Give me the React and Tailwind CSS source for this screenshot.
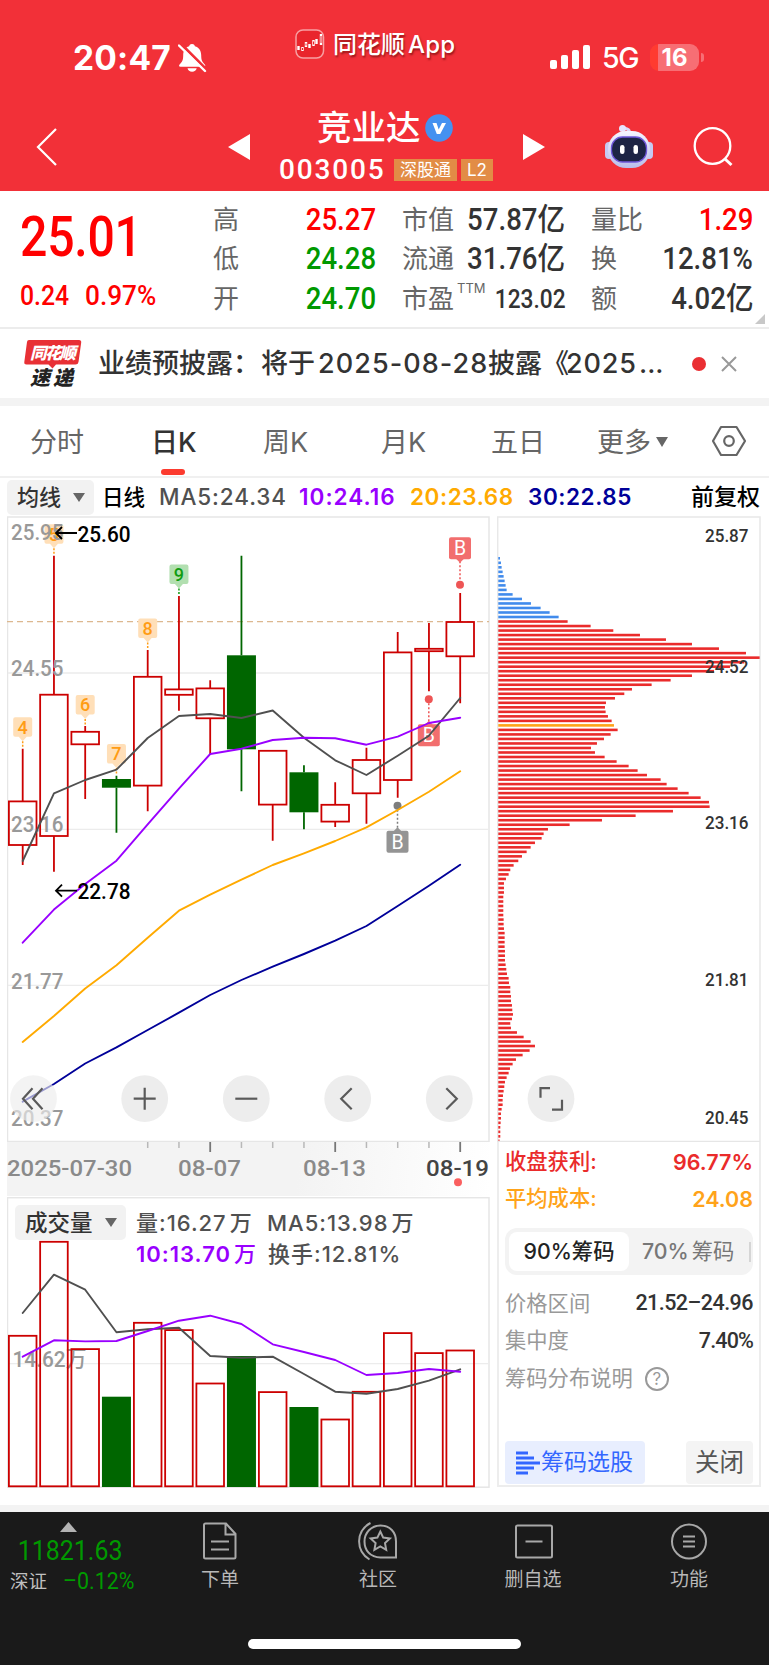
const SANS = "font-['Inter','Noto_Sans_CJK_SC',sans-serif]";
const DIN = "font-['Roboto','Noto_Sans_CJK_SC',sans-serif]";

const RED = "#cc0000";
const GREEN = "#006600";

const X0 = 22.7;
const STEP = 31.25;
const cx = (i) => X0 + i * STEP;

// [high, body top, body bottom, low, falling]
const candles = [
  [748.7, 801.4, 845, 865],
  [555.7, 694.7, 836, 871.7],
  [726, 731.8, 744.3, 799],
  [775.7, 779, 787.7, 832.7, true],
  [650, 676.8, 785.6, 811.3],
  [596, 689.4, 694.8, 710.7],
  [680.3, 688.4, 718.3, 754],
  [555.7, 655.3, 749.3, 791.3, true],
  [750.5, 750.8, 804.6, 840.7],
  [765.3, 772.3, 812.3, 829.3, true],
  [782.3, 804.8, 821.6, 827],
  [747.7, 760, 793.3, 823.7],
  [632, 652.4, 780, 797.7],
  [623, 648.8, 651.2, 691.3],
  [593, 622, 656.3, 703.3],
];

const averages = [
  { color: "#ffaa00", ys: [1042, 1016, 988.5, 965.3, 937.7, 910.7, 894.7, 879.7, 865, 853.3, 841, 827.3, 810, 791.7, 771.3] },
  { color: "#000099", ys: [1101.7, 1084, 1063.5, 1047.3, 1030, 1012.7, 995, 980, 966.7, 954, 940.7, 926, 906, 885.7, 864.7] },
  { color: "#505050", ys: [861, 793.3, 780, 769.7, 738, 716, 714, 718, 710.5, 737.7, 760.3, 775, 755.7, 735.7, 698] },
  { color: "#9900ff", ys: [942.7, 909.6, 884, 860.7, 824.3, 788.7, 754, 748.7, 740, 737.7, 738.3, 744.7, 736.7, 723, 717.7] },
];

const volumes = [1335, 1241, 1348.3, 1396.7, 1322, 1329.3, 1382.7, 1356, 1391.3, 1407, 1418.7, 1391, 1332.3, 1352.3, 1349.7];

const volumeAverages = [
  { color: "#505050", ys: [1313, 1274.7, 1289.7, 1332.3, 1329.3, 1327.7, 1356, 1357.7, 1356.7, 1374, 1391.7, 1393.7, 1389, 1380.7, 1369.3] },
  { color: "#9900ff", ys: [1356.7, 1340.3, 1341.4, 1341, 1331, 1320.7, 1315.7, 1324, 1344.3, 1352, 1360, 1375, 1373, 1369, 1371.7] },
];

const countTags = [
  { i: 0, n: 4, y: 717.3 },
  { i: 1, n: 5, y: 524.3 },
  { i: 2, n: 6, y: 695 },
  { i: 3, n: 7, y: 744 },
  { i: 4, n: 8, y: 618.5 },
  { i: 5, n: 9, y: 564.5, done: true },
];

const tradeTags = [
  { x: 460, y: 537.3, dot: 584.7, fill: "#f26e6e", mark: "#ee5555" },
  { x: 428.8, y: 724.3, dot: 699.3, fill: "#f26e6e", mark: "#ee5555" },
  { x: 397.5, y: 830.7, dot: 805.7, fill: "#949494", mark: "#7d7d7d" },
];

const chips = [
  5, 8, 10, 13, 16, 19, 22, 25, 43, 71, 98, 127, 154, 181,
  208, 277, 345, 425, 503, 581, 662, 743, 784, 738, 695, 647, 581, 517, 460, 401, 378, 350, 323, 320, 322, 329, 340, 347,
  358, 337, 317, 296, 278, 290, 319, 355, 391, 418, 446, 487, 505, 538, 571, 607, 632, 634, 524, 412, 311, 214, 149, 136, 130,
  110, 97, 85, 71, 60, 46, 36, 31, 23, 17, 17, 17, 15, 15, 15, 15, 15, 16, 16, 17, 19, 19, 19, 19, 20, 20, 20,
  22, 24, 26, 31, 32, 36, 36, 38, 38, 41, 42, 44, 41, 36, 38, 56, 76, 97, 110, 94, 73, 53, 43, 35, 31, 25, 20, 18, 16,
  14, 13, 13, 10, 8, 8, 7, 6, 6, 6, 4,
];

function chipColor(i) {
  if (i < 14) return "#418bec";
  return i === 37 ? "#ffa31a" : "#ea2b2b";
}

const points = (ys) => ys.map((y, i) => `${cx(i)},${y}`).join(" ");

function Lines({ series }) {
  return series.map((s) => (
    <polyline key={s.color} points={points(s.ys)} fill="none" stroke={s.color} strokeWidth="1.900" strokeLinejoin="round" strokeLinecap="round" />
  ));
}

function AxisText({ x, y, w, children, size = 22.5, fill = "#999", weight = 500 }) {
  return (
    <text x={x} y={y} textLength={w} lengthAdjust="spacingAndGlyphs" fontSize={size} fontWeight={weight} fill={fill}>
      {children}
    </text>
  );
}

function RoundButton({ x, d, opacity = 1 }) {
  return (
    <g>
      <circle cx={x} cy="1098.7" r="23.4" fill="#ededed" fillOpacity={opacity} />
      <path d={d} transform={`translate(${x} 1098.7)`} fill="none" stroke="#5a5a5a" strokeWidth="2.2" />
    </g>
  );
}

function StatusBar() {
  return (
    <div className="flex h-[100px] items-start">
      <div className="ml-[73px] mt-[37px] w-[105px] text-[33.500px] leading-[42px] font-bold tracking-[0.005em]">20:47</div>
      <svg className="mt-[43px]" width="29" height="30" viewBox="0 0 29 30">
        <path d="M14 1c2 0 2.700 1 2.900 2.300 4.200 1.200 6.300 4.600 6.300 9 0 5.500 1.300 6.700 3.800 9.500.6 1 .2 2-1 2H2.500c-1.400 0-1.800-1-1.100-2 2.500-2.800 3.800-4 3.800-9.500 0-4.400 1.800-7.800 6-9C11.400 2 12 1 14 1zM9.500 25.300h9.200c-.5 2.200-2.200 3.400-4.600 3.400s-4.100-1.200-4.600-3.400z" fill="white" />
        <path d="M3 1l26 26" stroke="#f23038" strokeWidth="3" />
        <path d="M1 2.500l26 25.500" stroke="white" strokeWidth="2.400" strokeLinecap="round" />
      </svg>
      <svg className="ml-[88px] mt-[29px]" width="30" height="30" viewBox="0 0 30 30">
        <rect x="1" y="1" width="27.500" height="28" rx="7" fill="#e9252c" stroke="#f7a0a2" strokeWidth="1.500" />
        <path d="M3.500 17v4M7.500 18v4M11 13v5M14.500 15v4M18.500 11v6M21.500 10v5M26 5v11" stroke="white" strokeWidth="2.400" />
        <path d="M7.500 19v2M11 14.500v2M18.500 12.500v3M26 7v7" stroke="#e9252c" strokeWidth="1" />
      </svg>
      <div className="ml-[8px] mt-[29px] flex w-[136px] text-[24px] leading-[32px] font-medium whitespace-nowrap [text-shadow:1px_2px_2px_rgba(80,0,0,0.55)]">
        <span className="w-[75px]">同花顺</span>
        <span className="tracking-[0.01em]">App</span>
      </div>
      <div className="ml-[81px] mt-[45px] flex h-[24px] items-end gap-[4px]">
        <i className="h-[9px] w-[7px] rounded-[2px] bg-white" />
        <i className="h-[14px] w-[7px] rounded-[2px] bg-white" />
        <i className="h-[19px] w-[7px] rounded-[2px] bg-white" />
        <i className="h-[24px] w-[7px] rounded-[2px] bg-white" />
      </div>
      <div className="ml-[12px] mt-[40px] w-[48px] text-[28.500px] leading-[36px] font-medium tracking-[-0.05em]">5G</div>
      <div className="mt-[44px] h-[27px] w-[49px] rounded-[9px] bg-[linear-gradient(90deg,#ff3b30_8px,#f76e74_8px)] text-center text-[24px] leading-[27px] font-bold">
        16
      </div>
      <i className="mt-[53px] ml-[2px] h-[9px] w-[3px] rounded-r-full bg-[#f76e74]" />
    </div>
  );
}

function Robot() {
  return (
    <svg width="50" height="46" viewBox="0 0 50 46">
      <defs>
        <linearGradient id="shell" x1="0" y1="0" x2="0" y2="1">
          <stop offset="0" stopColor="#f6f5ff" />
          <stop offset="1" stopColor="#b9bdea" />
        </linearGradient>
      </defs>
      <path d="M25 9c1-3-1-4-5-5" fill="none" stroke="#dcd9fa" strokeWidth="3" />
      <circle cx="18.500" cy="4.500" r="3.500" fill="#e6e4ff" />
      <rect x="1" y="18" width="8" height="17" rx="4" fill="#c6c9f2" />
      <rect x="41" y="18" width="8" height="17" rx="4" fill="#c6c9f2" />
      <rect x="4" y="7" width="42" height="37" rx="18" fill="url(#shell)" />
      <rect x="7.500" y="13" width="35" height="25" rx="11" fill="#1d2444" stroke="#6e56d8" strokeWidth="1.300" />
      <rect x="16" y="21" width="4.500" height="9" rx="2.200" fill="white" />
      <rect x="29.500" y="21" width="4.500" height="9" rx="2.200" fill="white" />
    </svg>
  );
}

function TitleBar() {
  return (
    <div className="flex h-[91px] items-start">
      <svg className="ml-[36px] mt-[27px]" width="22" height="40" viewBox="0 0 22 40">
        <path d="M20 2L2 20l18 18" fill="none" stroke="white" strokeWidth="2.200" />
      </svg>
      <svg className="ml-[170px] mt-[34px]" width="22" height="26" viewBox="0 0 22 26">
        <path d="M22 0v26L0 13z" fill="white" />
      </svg>
      <div className="ml-[29px] w-[230px]">
        <div className="ml-[38px] flex h-[56px] items-center">
          <span className="text-[34.500px] leading-[40px] font-medium">竞业达</span>
          <svg className="ml-[4px]" width="28" height="28" viewBox="0 0 28 28">
            <circle cx="14" cy="14" r="13.800" fill="#4491f0" />
            <path d="M7.500 9h4l2.200 6.500L17 9h4l-5.800 11h-3.400z" fill="white" />
          </svg>
        </div>
        <div className="mt-[3px] flex h-[22px] items-center gap-[4px] text-[17px] leading-[22px]">
          <span className={`${DIN} w-[111px] text-[28px] font-medium tracking-[0.065em]`}>003005</span>
          <span className="w-[63px] bg-[#e28c46] text-center">深股通</span>
          <span className="w-[32px] bg-[#e28c46] text-center">L2</span>
        </div>
      </div>
      <svg className="ml-[14px] mt-[34px]" width="22" height="26" viewBox="0 0 22 26">
        <path d="M0 0v26l22-13z" fill="white" />
      </svg>
      <div className="ml-[59px] mt-[24px]"><Robot /></div>
      <svg className="ml-[39px] mt-[27px]" width="40" height="40" viewBox="0 0 40 40" fill="none" stroke="white" strokeWidth="2.300">
        <circle cx="19.500" cy="19" r="17.800" />
        <path d="M31.500 31.500l7 6.500" strokeWidth="3" />
      </svg>
    </div>
  );
}

const quotes = [
  {
    box: "w-[163px]",
    rows: [
      ["高", "25.27", "text-[31px] text-[#ff0000]"],
      ["低", "24.28", "text-[31px] text-[#009900]"],
      ["开", "24.70", "text-[31px] text-[#009900]"],
    ],
  },
  {
    box: "ml-[26px] w-[163px]",
    rows: [
      ["市值", "57.87亿", "text-[31px] text-[#333]"],
      ["流通", "31.76亿", "text-[31px] text-[#333]"],
      ["市盈", "123.02", "text-[25.500px] text-[#333]", "TTM"],
    ],
  },
  {
    box: "ml-[26px] w-[162px]",
    rows: [
      ["量比", "1.29", "text-[31px] text-[#ff0000]"],
      ["换", "12.81%", "text-[31px] text-[#333]"],
      ["额", "4.02亿", "text-[31px] text-[#333]"],
    ],
  },
];

function Quote() {
  return (
    <div className="relative flex h-[138px] border-b-2 border-[#ececec] pt-[9px]">
      <div className={`${DIN} w-[213px] pl-[20px] text-[#ff0000]`}>
        <div className="mt-[9px] h-[56px] w-[150px] origin-left scale-x-[0.86] text-[56px] leading-[56px] font-medium tracking-[-0.005em]">25.01</div>
        <div className="mt-[15px] flex text-[28.500px] leading-[32px] font-medium">
          <span className="w-[65px] origin-left scale-x-[0.87]">0.24</span>
          <span className="origin-left scale-x-[0.92]">0.97%</span>
        </div>
      </div>
      {quotes.map((col) => (
        <div key={col.rows[0][0]} className={col.box}>
          {col.rows.map(([label, value, tone, note]) => (
            <div key={label} className="flex h-[39.500px] items-center whitespace-nowrap">
              <span className="text-[26px] leading-[30px] text-[#666]">{label}</span>
              {note && <span className="mb-[22px] ml-[3px] text-[13px] leading-[14px] text-[#666]">{note}</span>}
              <span className={`${DIN} ml-auto origin-right scale-x-[0.89] leading-[36px] font-medium ${tone}`}>{value}</span>
            </div>
          ))}
        </div>
      ))}
      <svg className="absolute right-[4px] bottom-[3px]" width="10" height="10" viewBox="0 0 10 10">
        <path d="M10 0v10H0z" fill="#c8c8c8" />
      </svg>
    </div>
  );
}

function News() {
  return (
    <div className="flex h-[69px] items-center">
      <div className="ml-[24px] w-[57px]">
        <svg width="58" height="56" viewBox="0 -3 58 56">
          <path d="M5 1h50q2.500 0 2.200 2.500L54.500 23q-.4 2.500-3 2.500H32l-3.500 4-4-4H2.500q-2.500 0-2.200-2.500L3 3Q3.200 1 5 1z" fill="#e83035" />
          <g fontFamily="Noto Sans CJK SC" fontWeight="900" fontStyle="italic">
            <text x="6" y="19.500" fontSize="16.500" fill="white" textLength="46">同花顺</text>
            <text x="6" y="46" fontSize="20" fill="#222" textLength="43">速递</text>
          </g>
        </svg>
      </div>
      <div className="ml-[17px] flex text-[27px] leading-[36px] font-medium text-[#333] whitespace-nowrap">
        <span className="w-[163px]">业绩预披露：</span>
        <span className="w-[57px]">将于</span>
        <span className="w-[170px] tracking-[0.04em]">2025-08-28</span>
        <span className="w-[78px]">披露《</span>
        <span className="w-[73px] tracking-[0.03em]">2025</span>
        <span>...</span>
      </div>
      <i className="absolute left-[692px] size-[14px] rounded-full bg-[#ea2f33]" />
      <svg className="absolute left-[721px]" width="16" height="16" viewBox="0 0 16 16">
        <path d="M1 1l14 14M15 1L1 15" stroke="#999" strokeWidth="2" />
      </svg>
    </div>
  );
}

function Tabs() {
  return (
    <div className="flex h-[72px] items-center border-b-2 border-[#f0f0f0] pt-[4px] text-[27px] leading-[36px] text-[#666]">
      <span className="ml-[30px] w-[121px]">分时</span>
      <span className="relative w-[112px] font-medium text-[#333]">
        日K
        <i className="absolute top-[44px] left-[10px] h-[6px] w-[24px] rounded-full bg-[#fc3b2f]" />
      </span>
      <span className="w-[118px]">周K</span>
      <span className="w-[110px]">月K</span>
      <span className="w-[106px]">五日</span>
      <span className="w-[59px]">更多</span>
      <svg className="mb-[2px]" width="12" height="10" viewBox="0 0 12 10"><path d="M0 0h12L6 10z" fill="#666" /></svg>
      <svg className="mb-[4px] ml-[43px]" width="36" height="32" viewBox="0 0 36 32" fill="none" stroke="#666" strokeWidth="2.200" strokeLinejoin="round">
        <path d="M10 2h15.500L34 16l-8.500 14H10L2 16z" />
        <circle cx="18" cy="16" r="4.800" />
      </svg>
    </div>
  );
}

function Legend() {
  return (
    <div className="flex h-[38px] items-center text-[22.500px] leading-[34px] font-medium whitespace-nowrap">
      <div className="ml-[7px] flex h-[35px] w-[87px] items-center rounded-[5px] bg-[#f2f2f2] pl-[10px] text-[22px] text-[#333]">
        均线
        <svg className="ml-[12px]" width="12" height="9" viewBox="0 0 12 9"><path d="M0 0h12L6 9z" fill="#666" /></svg>
      </div>
      <span className="ml-[8px] w-[57px] text-[21.500px] text-black">日线</span>
      <span className="w-[140px] tracking-[0.04em] text-[#505050]">MA5:24.34</span>
      <span className="w-[111px] font-semibold tracking-[0.045em] text-[#9900ff]">10:24.16</span>
      <span className="w-[118px] font-semibold tracking-[0.025em] text-[#ffaa00]">20:23.68</span>
      <span className="w-[163px] font-semibold tracking-[0.025em] text-[#000099]">30:22.85</span>
      <span className="text-[23px] text-black">前复权</span>
    </div>
  );
}

function CountTag({ i, n, y, done }) {
  const x = cx(i);
  const ink = done ? "#109c10" : "#ff9c14";
  return (
    <g>
      <path d={`M${x - 7.500} ${y}h15q2 0 2 2v15.500q0 2-2 2h-3.500l-4 4.500-4-4.500h-3.500q-2 0-2-2v-15.500q0-2 2-2z`} fill={done ? "#b2dfb0" : "#ffdfb8"} />
      <path d={`M${x} ${y + 24}v7`} stroke={ink} strokeWidth="1.500" strokeDasharray="2 1.500" />
      <text x={x} y={y + 16.300} textAnchor="middle" fontSize="18" fontWeight="500" fill={ink}>{n}</text>
    </g>
  );
}

function TradeTag({ x, y, dot, fill, mark }) {
  const above = dot > y;
  return (
    <g>
      <path d={above ? `M${x} ${y + 24}V${dot}` : `M${x} ${dot}V${y - 2}`} stroke={mark} strokeWidth="1.500" strokeDasharray="2 2" />
      <circle cx={x} cy={dot} r="4" fill={mark} />
      <rect x={x - 11} y={y} width="22" height="22" rx="2" fill={fill} />
      <path d={above ? `M${x - 4} ${y + 21.500}h8l-4 4z` : `M${x - 4} ${y + 0.500}h8l-4-4z`} fill={fill} />
      <text x={x} y={y + 18} textAnchor="middle" fontSize="19.500" fill="white">B</text>
    </g>
  );
}

function CandleChart() {
  return (
    <svg className={DIN} width="484" height="626" viewBox="7 516 484 626">
      <rect x="7.500" y="517" width="481.500" height="624.500" fill="white" stroke="#e6e6e6" strokeWidth="1.500" />
      <path d="M8 673H489M8 829.300H489M8 985.300H489" stroke="#ececec" strokeWidth="1.300" />
      <path d="M7 621.700H489" stroke="#dcb890" strokeWidth="1.300" strokeDasharray="6 4" />
      {candles.map(([high, top, bottom, low, falling], i) => {
        const color = falling ? GREEN : RED;
        return (
          <g key={i} stroke={color} strokeWidth="1.800">
            <path d={`M${cx(i)} ${high}V${top}M${cx(i)} ${bottom}V${low}`} />
            {falling ? (
              <rect x={cx(i) - 14.500} y={top} width="29" height={bottom - top} fill={color} stroke="none" />
            ) : (
              <rect x={cx(i) - 13.800} y={top} width="27.600" height={bottom - top} fill="none" />
            )}
          </g>
        );
      })}
      {countTags.map((t) => <CountTag key={t.n} {...t} />)}
      <AxisText x="11" y="539.500" w="52.500">25.95</AxisText>
      <AxisText x="11" y="675.700" w="52.500">24.55</AxisText>
      <AxisText x="11" y="832" w="52.500">23.16</AxisText>
      <AxisText x="11" y="989" w="52.500">21.77</AxisText>
      <AxisText x="11" y="1126" w="52.500">20.37</AxisText>
      {tradeTags.map((t) => <TradeTag key={t.x} {...t} />)}
      <Lines series={averages} />
      <path d="M77 533H56M62 527l-6 6 6 6M77 890.700H56M62 884.700l-6 6 6 6" fill="none" stroke="black" strokeWidth="1.800" />
      <AxisText x="77.500" y="541.500" w="53" fill="black">25.60</AxisText>
      <AxisText x="77.500" y="898.500" w="53" fill="black">22.78</AxisText>
      <RoundButton x={33.500} opacity={0.65} d="M-1 -10.500L-10.500 0L-1 10.500M9 -10.500L-.5 0L9 10.500" />
      <RoundButton x={144.700} d="M-11 0H11M0 -11V11" />
      <RoundButton x={246.300} d="M-11 0H11" />
      <RoundButton x={347.700} d="M4 -10.500L-6.500 0L4 10.500" />
      <RoundButton x={449.300} d="M-3 -10.500L7.500 0L-3 10.500" />
    </svg>
  );
}

function DateAxis() {
  return (
    <svg className={`${DIN} bg-[linear-gradient(95deg,#f3f3f3_60%,#ffffff)]`} width="483" height="54" viewBox="7 1142 483 54">
      {[4, 5, 6, 7, 8, 9, 10, 11, 12, 13, 14].map((i) =>
        i % 4 === 2 ? (
          <path key={i} d={`M${cx(i)} 1142v10`} stroke="#777" strokeWidth="1.800" />
        ) : (
          <path key={i} d={`M${cx(i)} 1142v6`} stroke="#b8b8b8" strokeWidth="1.500" />
        )
      )}
      <AxisText x="7" y="1176.300" w="125" fill="#8a8a8a">2025-07-30</AxisText>
      <AxisText x="178" y="1176.300" w="63" fill="#8a8a8a">08-07</AxisText>
      <AxisText x="303" y="1176.300" w="63" fill="#8a8a8a">08-13</AxisText>
      <AxisText x="426" y="1176.300" w="63" fill="#444">08-19</AxisText>
      <circle cx="458" cy="1182.300" r="4" fill="#fa5f5f" />
    </svg>
  );
}

function VolumeChart() {
  return (
    <div className="relative mt-[1px] h-[291px] w-[484px]">
      <svg className={DIN} width="484" height="291" viewBox="7 1197 484 291">
        <rect x="7.500" y="1197.700" width="481.500" height="289.500" fill="white" stroke="#e6e6e6" strokeWidth="1.500" />
        <path d="M8 1363.700H489" stroke="#ececec" strokeWidth="1.300" />
        <AxisText x="12.500" y="1367" w="74">14.62万</AxisText>
        {volumes.map((y, i) =>
          candles[i][4] ? (
            <rect key={i} x={cx(i) - 14.500} y={y} width="29" height={1487 - y} fill={GREEN} />
          ) : (
            <rect key={i} x={cx(i) - 13.800} y={y + 0.800} width="27.600" height={1485.500 - y} fill="none" stroke={RED} strokeWidth="1.800" />
          )
        )}
        <Lines series={volumeAverages} />
      </svg>
      <div className="absolute top-[8px] left-[8px] flex items-start text-[22px] leading-[31px] font-medium text-[#505050] whitespace-nowrap">
        <div className="flex h-[35px] w-[111px] items-center rounded-[5px] bg-[#f2f2f2] pl-[10px] text-[22.500px] text-[#333]">
          成交量
          <svg className="ml-[12px]" width="12" height="9" viewBox="0 0 12 9"><path d="M0 0h12L6 9z" fill="#666" /></svg>
        </div>
        <div className="ml-[10px] grid grid-cols-[131px_auto] pt-[3px] tracking-[0.045em]">
          <span>量:16.27<b className="ml-[3px] font-medium">万</b></span>
          <span>MA5:13.98<b className="ml-[3px] font-medium">万</b></span>
          <span className="font-semibold text-[#9900ff]">10:13.70<b className="ml-[3px] font-medium">万</b></span>
          <span className="ml-[1px]">换手:12.81%</span>
        </div>
      </div>
    </div>
  );
}

function ChipChart() {
  return (
    <svg className={DIN} width="264" height="626" viewBox="497 516 264 626">
      <path d="M760 1142V517H497.700V1142" fill="none" stroke="#e8e8e8" strokeWidth="1.500" />
      {chips.map((len, i) => (
        <rect key={i} x="498.300" y={557 + i * 4.516} width={len / 3} height="2.600" fill={chipColor(i)} />
      ))}
      <path d="M497 1141.300H760" stroke="#e6e6e6" strokeWidth="1.300" />
      <AxisText x="705" y="541.700" w="43.500" size={18.800} fill="#333">25.87</AxisText>
      <AxisText x="705" y="673" w="43.500" size={18.800} fill="#333">24.52</AxisText>
      <AxisText x="705" y="829" w="43.500" size={18.800} fill="#333">23.16</AxisText>
      <AxisText x="705" y="985.700" w="43.500" size={18.800} fill="#333">21.81</AxisText>
      <AxisText x="705" y="1124.300" w="43.500" size={18.800} fill="#333">20.45</AxisText>
      <RoundButton x={551} d="M-10.500 -1V-10.500H-1M11 1V11H1" />
    </svg>
  );
}

function ChipInfo() {
  return (
    <div className="h-[345px] w-[264px] border-x-2 border-b-2 border-[#ededed] pr-[6px] pl-[6px] text-[21.300px] whitespace-nowrap">
      <div className="flex h-[38px] items-center justify-between pt-[2px] font-medium text-[#ea2b2b]">
        <span>收盘获利:</span>
        <span className="text-[21.500px] font-semibold">96.77%</span>
      </div>
      <div className="flex h-[38px] items-center justify-between font-medium text-[#ffa31a]">
        <span>平均成本:</span>
        <span className="text-[21.500px] font-semibold">24.08</span>
      </div>
      <div className="mt-[10px] flex h-[47px] items-center rounded-[12px] bg-[#f3f3f3] pl-[4px]">
        <span className="h-[39px] w-[120px] rounded-[8px] bg-white text-center leading-[39px] font-medium text-[#222]">90%筹码</span>
        <span className="ml-[13px] w-[107px] font-medium text-[#777]">70%<b className="ml-[3px] font-normal">筹码</b></span>
        <i className="h-[20px] w-[2px] bg-[#d5d5d5]" />
      </div>
      <div className="mt-[10px] flex h-[37px] items-center justify-between text-[#999]">
        价格区间
        <span className={`${DIN} text-[21.500px] font-medium tracking-[-0.025em] text-[#333]`}>21.52–24.96</span>
      </div>
      <div className="flex h-[38px] items-center justify-between text-[#999]">
        集中度
        <span className={`${DIN} text-[21.500px] font-medium tracking-[-0.04em] text-[#333]`}>7.40%</span>
      </div>
      <div className="flex h-[38px] items-center text-[#999]">
        筹码分布说明
        <span className="ml-[12px] size-[24px] rounded-full border-2 border-[#999] text-center text-[17px] leading-[20px]">?</span>
      </div>
      <div className="mt-[43px] flex h-[43px] justify-between">
        <div className="flex w-[140px] items-center rounded-[4px] bg-[#e8eefe] pl-[11px] text-[23px] text-[#3366ff]">
          <svg width="24" height="24" viewBox="0 0 24 24" stroke="#3366ff" strokeWidth="3">
            <path d="M0 2h12M0 7h18M0 12h24M0 17h18M0 22h12" />
          </svg>
          <span className="ml-[1px]">筹码选股</span>
        </div>
        <div className="w-[67px] rounded-[4px] bg-[#f4f4f4] text-center text-[24.500px] leading-[43px] text-[#555]">关闭</div>
      </div>
    </div>
  );
}

function NavItem({ box, label, children }) {
  return (
    <div className={`flex flex-col items-center ${box}`}>
      <svg width="42" height="42" viewBox="0 0 42 42" fill="none" stroke="#a8a8a8" strokeWidth="2">{children}</svg>
      <span className="mt-[4px] text-[19px] leading-[28px] text-[#b8b8b8]">{label}</span>
    </div>
  );
}

function BottomBar() {
  return (
    <div className="relative flex h-[153px] bg-[#1a1a1a] pt-[8px]">
      <div className={`${DIN} w-[140px] text-[#009900]`}>
        <svg className="mt-[2px] ml-[60px]" width="17" height="10" viewBox="0 0 17 10"><path d="M8.500 0L17 10H0z" fill="#b3b3b3" /></svg>
        <div className="mt-[4px] w-[121px] origin-left scale-x-[0.89] pl-[20px] text-[28px] leading-[30px]">11821.63</div>
        <div className="mt-[1px] flex items-center pl-[10px] leading-[30px]">
          <span className="w-[53px] text-[18.500px] text-[#c0c0c0]">深证</span>
          <span className="origin-left scale-x-[0.93] text-[23px]">–0.12%</span>
        </div>
      </div>
      <NavItem box="ml-[50px] w-[60px]" label="下单">
        <path d="M5 5q0-1.500 1.500-1.500H27L36.500 14v23q0 1.500-1.500 1.500H6.500Q5 38.500 5 37zM26.500 4v10.500H36M12 21.500h18M12 29.500h18" />
      </NavItem>
      <NavItem box="ml-[98px] w-[60px]" label="社区">
        <path d="M39 37.500H23.500C13 37.500 7.500 30 7.500 21.500S14 5.500 23.500 5.500 39 12 39 21.500zM13.500 3C-1.500 11 -1.500 31 12.500 39.500" />
        <path d="M23.300 11.500l2.900 6.100 6.700.9-4.900 4.600 1.200 6.700-5.900-3.300-5.900 3.300 1.200-6.700-4.900-4.600 6.700-.9z" />
      </NavItem>
      <NavItem box="ml-[95px] w-[60px]" label="删自选">
        <rect x="4" y="5.500" width="36" height="32" rx="1.500" />
        <path d="M13.500 21.500h17" />
      </NavItem>
      <NavItem box="ml-[96px] w-[60px]" label="功能">
        <circle cx="21" cy="21.500" r="17" />
        <path d="M15 16.500h12M15 21.500h12M15 26.500h12" />
      </NavItem>
      <i className="absolute bottom-[16px] left-[248px] h-[10px] w-[273px] rounded-full bg-white" />
    </div>
  );
}

export default function App() {
  return (
    <div className={`${SANS} relative h-[1665px] w-[769px] overflow-hidden bg-white`}>
      <header className="h-[191px] bg-[#f23038] text-white">
        <StatusBar />
        <TitleBar />
      </header>
      <Quote />
      <News />
      <div className="h-[8px] bg-[#f3f3f3]" />
      <Tabs />
      <Legend />
      <main className="flex pl-[7px]">
        <div className="flex w-[490px] flex-col">
          <CandleChart />
          <DateAxis />
          <VolumeChart />
        </div>
        <div>
          <ChipChart />
          <ChipInfo />
        </div>
      </main>
      <div className="mt-[17px] h-[7px] bg-[#f3f3f3]" />
      <BottomBar />
    </div>
  );
}
